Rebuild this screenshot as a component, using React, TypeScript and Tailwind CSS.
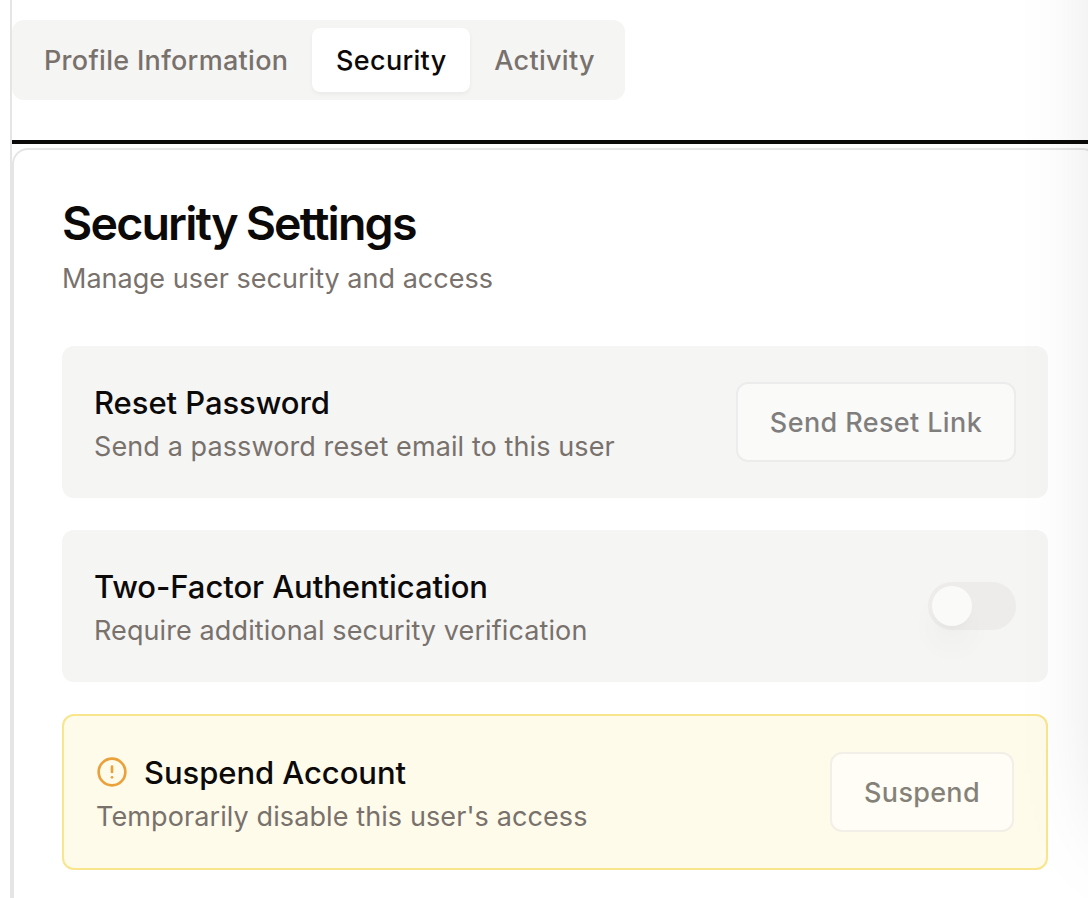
import { CircleAlert } from "lucide-react";
import type { ReactNode } from "react";

function Tab({ label, active = false }: { label: string; active?: boolean }) {
  return (
    <button
      className={
        active
          ? "h-16 w-[158px] shrink-0 rounded-[8px] bg-white pt-0.5 text-center text-[#0c0a09] shadow-[0_2px_4px_rgba(0,0,0,0.05)]"
          : "h-16 shrink-0 px-6 pt-0.5 text-[#78716c]"
      }
    >
      {label}
    </button>
  );
}

function SettingText({ title, detail, icon }: { title: string; detail: string; icon?: ReactNode }) {
  return (
    <div>
      <h3 className="flex h-12 items-center gap-4 text-[31px] font-medium tracking-[-0.06px] text-[#0c0a09]">
        {icon}
        <span className="pt-0.5">{title}</span>
      </h3>
      <p className="h-10 pt-px text-[27px] leading-10 tracking-[0.1px] text-[#78716c]">{detail}</p>
    </div>
  );
}

export default function App() {
  return (
    <div className="relative h-[898px] w-[1088px] overflow-hidden bg-white pl-[10px] font-['Inter','Liberation_Sans',sans-serif] whitespace-nowrap">
      <main className="h-full border-l-2 border-[#e5e5e5] pt-5">
        <div className="flex h-20 w-[613px] items-center rounded-[12px] bg-[#f5f5f4] p-2 text-[27px] font-medium tracking-[0.3px]">
          <Tab label="Profile Information" />
          <Tab label="Security" active />
          <Tab label="Activity" />
        </div>
        <div className="mt-10 h-1 bg-[#0c0a09]" />
        <section className="mt-1 h-[800px] w-[1086px] rounded-[16px] border-2 border-[#e5e5e5] bg-white p-12">
          <h2 className="h-12 pt-px text-[46.5px] leading-[48px] font-semibold tracking-[-1.8px] [word-spacing:-1px] text-[#0c0a09]">Security Settings</h2>
          <p className="mt-3 h-10 pt-px text-[27px] leading-10 tracking-[0.02px] text-[#78716c]">Manage user security and access</p>
          <div className="mt-12 flex flex-col gap-8">
            <div className="flex h-[152px] items-center justify-between rounded-[12px] bg-[#f5f5f4] px-8">
              <SettingText title="Reset Password" detail="Send a password reset email to this user" />
              <button className="h-20 w-[280px] rounded-[12px] border-2 border-[#e5e5e5] bg-white pt-0.5 text-[27px] font-medium tracking-[0.38px] text-[#0c0a09] opacity-50">
                Send Reset Link
              </button>
            </div>
            <div className="flex h-[152px] items-center justify-between rounded-[12px] bg-[#f5f5f4] px-8">
              <SettingText title="Two-Factor Authentication" detail="Require additional security verification" />
              <div className="flex h-12 w-[88px] items-center rounded-full bg-[#e7e5e4] p-1 opacity-50">
                <span className="size-10 rounded-full bg-white shadow-[0_20px_30px_-6px_rgba(0,0,0,0.08),0_8px_12px_-8px_rgba(0,0,0,0.08)]" />
              </div>
            </div>
            <div className="flex h-[156px] items-center justify-between rounded-[12px] border-2 border-[#f8e58c] bg-[#fffbeb] px-8">
              <SettingText
                title="Suspend Account"
                detail="Temporarily disable this user's access"
                icon={<CircleAlert className="size-8 text-[#e9a13b]" strokeWidth={2} />}
              />
              <button className="h-20 w-[184px] rounded-[12px] border-2 border-[#e5e5e5] bg-white pt-0.5 text-[27px] font-medium tracking-[0.3px] text-[#0c0a09] opacity-50">
                Suspend
              </button>
            </div>
          </div>
        </section>
      </main>
      <div className="pointer-events-none absolute top-[-500px] left-[1110px] h-[1296px] w-[800px] shadow-[0_50px_96px_-24px_rgba(0,0,0,0.25)]" />
    </div>
  );
}
